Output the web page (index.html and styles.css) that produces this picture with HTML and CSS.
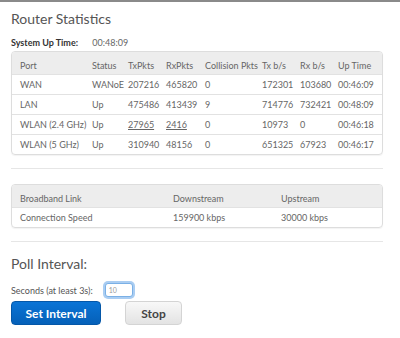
FILE: index.html
```html
<!DOCTYPE html>
<html lang="en">
<head>
    <meta charset="UTF-8">
    <title>Router Statistics</title>
    <link rel="stylesheet" href="styles.css">
</head>
<body>
    <div class="page">
        <h2 class="title">Router Statistics</h2>
        <p class="uptime"><span class="uptime-label">System Up Time:</span> 00:48:09</p>

        <div class="box">
            <table class="grid stats">
                <tr class="head">
                    <td>Port</td><td>Status</td><td>TxPkts</td><td>RxPkts</td><td>Collision Pkts</td><td>Tx b/s</td><td>Rx b/s</td><td>Up Time</td>
                </tr>
                <tr>
                    <td>WAN</td><td>WANoE</td><td>207216</td><td>465820</td><td>0</td><td>172301</td><td>103680</td><td>00:46:09</td>
                </tr>
                <tr>
                    <td>LAN</td><td>Up</td><td>475486</td><td>413439</td><td>9</td><td>714776</td><td>732421</td><td>00:48:09</td>
                </tr>
                <tr>
                    <td>WLAN (2.4 GHz)</td><td>Up</td><td><u>27965</u></td><td><u>2416</u></td><td>0</td><td>10973</td><td>0</td><td>00:46:18</td>
                </tr>
                <tr>
                    <td>WLAN (5 GHz)</td><td>Up</td><td>310940</td><td>48156</td><td>0</td><td>651325</td><td>67923</td><td>00:46:17</td>
                </tr>
            </table>
        </div>

        <hr class="sep">

        <div class="box">
            <table class="grid link">
                <tr class="head">
                    <td>Broadband Link</td><td>Downstream</td><td>Upstream</td>
                </tr>
                <tr>
                    <td>Connection Speed</td><td>159900 kbps</td><td>30000 kbps</td>
                </tr>
            </table>
        </div>

        <hr class="sep">

        <h3 class="poll-title">Poll Interval:</h3>
        <div class="poll-row">
            <label for="secs">Seconds (at least 3s):</label>
            <input id="secs" class="secs" type="text" value="10">
        </div>
        <div class="buttons">
            <button class="btn btn-blue">Set Interval</button>
            <button class="btn btn-grey">Stop</button>
        </div>
    </div>
</body>
</html>
```
FILE: styles.css
```css
body {
    margin: 0;
    font-family: Lato, "Open Sans", sans-serif;
    color: #555;
    background: #fff;
    border-top: 2px solid #8a8a8a;
}

.page {
    padding: 0 17px 0 11px;
}

.title {
    margin: 0;
    padding-top: 8px;
    font-size: 14px;
    font-weight: normal;
    color: #555;
    line-height: 18px;
}

.uptime {
    margin: 9px 0 0;
    font-size: 9px;
    line-height: 12px;
    color: #666;
}

.uptime-label {
    display: inline-block;
    width: 79px;
    font-weight: bold;
    color: #333;
}

.box {
    margin-top: 2px;
    border: 1px solid #ddd;
    border-radius: 4px;
    overflow: hidden;
    box-shadow: 0 1px 1px rgba(0, 0, 0, 0.05);
}

.grid {
    width: 100%;
    table-layout: fixed;
    border-collapse: collapse;
    font-size: 9px;
    color: #666;
}

.grid td {
    height: 19px;
    padding: 0 0 0 8px;
    border-top: 1px solid #e2e2e2;
    white-space: nowrap;
}

.grid tr:first-child td {
    border-top: none;
}

.grid .head td {
    background: #ededed;
    height: 17px;
    padding-top: 5px;
}

.stats td:nth-child(1) { width: 64px; }
.stats td:nth-child(2) { width: 28px; }
.stats td:nth-child(3) { width: 30px; }
.stats td:nth-child(4) { width: 31px; }
.stats td:nth-child(5) { width: 49px; }
.stats td:nth-child(6) { width: 30px; }
.stats td:nth-child(7) { width: 30px; }

.link td:nth-child(1) { width: 145px; }
.link td:nth-child(2) { width: 100px; }

.sep {
    margin: 13px 0 15px;
    border: none;
    border-top: 1px solid #e6e6e6;
}

.poll-title {
    margin: 0;
    font-size: 14px;
    font-weight: normal;
    color: #555;
    line-height: 14px;
}

.poll-row {
    display: flex;
    align-items: center;
    margin-top: 12px;
    font-size: 9px;
}

.secs {
    margin-left: 12px;
    width: 20px;
    height: 10px;
    padding: 1px 3px;
    font-size: 7px;
    color: #999;
    border: 1px solid #7ab0e6;
    border-radius: 3px;
    box-shadow: 0 0 0 2px #aacdf2;
    outline: none;
    font-family: inherit;
}

.buttons {
    display: flex;
    gap: 24px;
    margin-top: 4px;
}

.btn {
    height: 24px;
    border-radius: 4px;
    font-family: inherit;
    font-size: 12px;
    font-weight: bold;
    cursor: pointer;
}

.btn-blue {
    width: 90px;
    border: 1px solid #0457a8;
    background: linear-gradient(#0a74d6, #0560b8);
    color: #fff;
}

.btn-grey {
    width: 57px;
    border: 1px solid #d4d4d4;
    background: linear-gradient(#f8f8f8, #e3e3e3);
    color: #444;
}
```
